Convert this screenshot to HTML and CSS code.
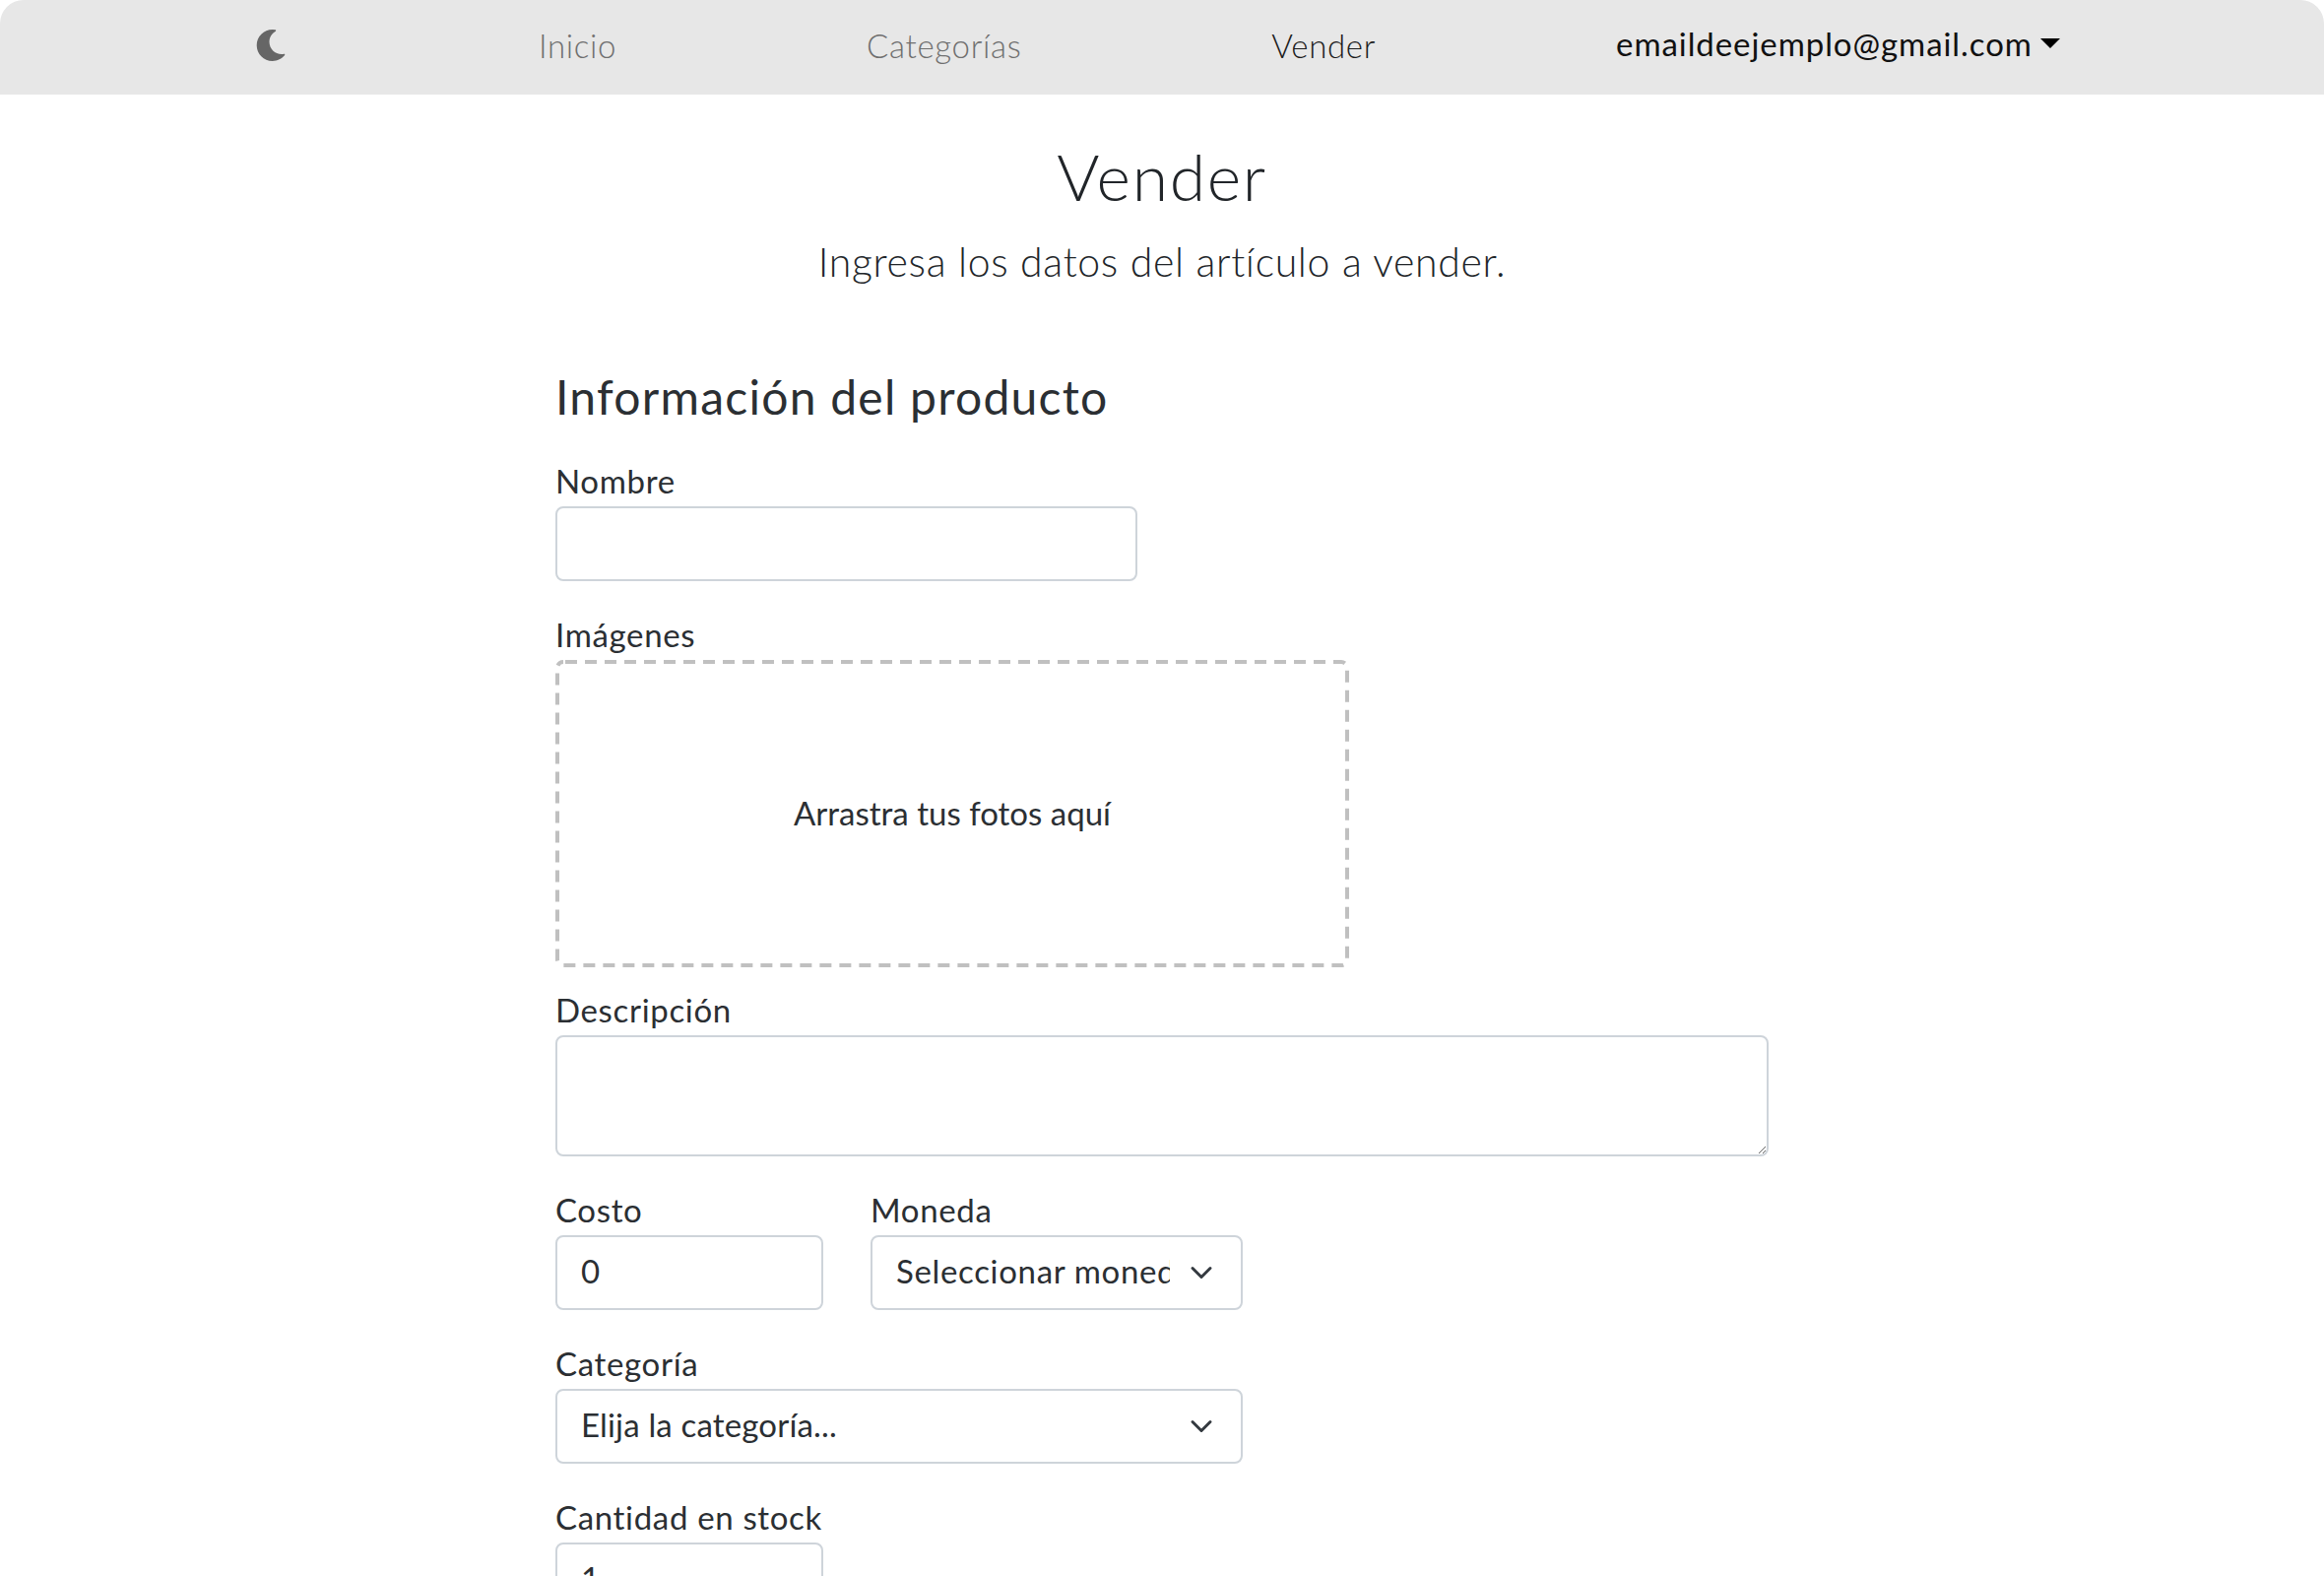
FILE: index.html
```html
<!DOCTYPE html>
<html>

<head>
    <title>Vender</title>
    <link rel="stylesheet" href="styles.css">
</head>

<body>

    <nav class="navbar">
        <svg class="moon" viewBox="0 0 512 512">
            <path d="M283.211 512c78.962 0 151.079-35.925 198.857-94.792 7.068-8.708-.639-21.43-11.562-19.35-124.203 23.654-238.262-71.576-238.262-196.954 0-72.222 38.662-138.635 101.498-174.394 9.686-5.512 7.25-20.197-3.756-22.23A258.156 258.156 0 0 0 283.211 0c-141.309 0-256 114.511-256 256 0 141.309 114.511 256 256 256z"/>
        </svg>
        <a class="nav-link" href="#">Inicio</a>
        <a class="nav-link" href="#">Categorías</a>
        <a class="nav-link active" href="#">Vender</a>
        <a class="nav-user" href="#">emaildeejemplo@gmail.com<span class="caret"></span></a>
    </nav>

    <main class="container">
        <div class="intro">
            <h2>Vender</h2>
            <p class="lead">Ingresa los datos del artículo a vender.</p>
        </div>

        <h4>Información del producto</h4>

        <form>
            <div class="field">
                <label for="nombre">Nombre</label>
                <input class="control w-name" id="nombre" type="text">
            </div>

            <div class="field field-drop">
                <label>Imágenes</label>
                <div class="dropzone">
                    <svg class="dashes" width="806" height="312">
                        <rect x="2" y="2" width="802" height="308" rx="6" />
                    </svg>
                    Arrastra tus fotos aquí
                </div>
            </div>

            <div class="field">
                <label for="descripcion">Descripción</label>
                <textarea class="control w-full" id="descripcion"></textarea>
            </div>

            <div class="field row">
                <div>
                    <label for="costo">Costo</label>
                    <input class="control w-small" id="costo" type="text" value="0">
                </div>
                <div>
                    <label for="moneda">Moneda</label>
                    <select class="control select w-currency" id="moneda">
                        <option>Seleccionar moneda</option>
                    </select>
                </div>
            </div>

            <div class="field">
                <label for="categoria">Categoría</label>
                <select class="control select w-category" id="categoria">
                    <option>Elija la categoría...</option>
                </select>
            </div>

            <div class="field">
                <label for="stock">Cantidad en stock</label>
                <input class="control w-small" id="stock" type="text" value="1">
            </div>
        </form>
    </main>

</body>

</html>
```

FILE: styles.css
```css
html {
    overflow: hidden;
}

body {
    margin: 0;
    font-family: Lato, 'Open Sans', sans-serif;
    font-size: 33px;
    font-weight: 400;
    line-height: 1.5;
    letter-spacing: 0.02em;
    color: #2b2f33;
    background-color: #fff;
}

/* Navbar */
.navbar {
    display: flex;
    align-items: center;
    gap: 254px;
    height: 96px;
    padding-left: 259px;
    background-color: #e7e7e7;
    border-radius: 24px 24px 0 0;
}

.moon {
    width: 32px;
    height: 32px;
    margin-top: -4px;
    margin-right: 2px;
    fill: #666;
}

.nav-link {
    margin-top: -2px;
    color: #6f6f6f;
    font-weight: 300;
    text-decoration: none;
}

.nav-link.active {
    color: #1c1c1c;
}

.nav-user {
    margin-top: -6px;
    margin-left: -10px;
    letter-spacing: 0.028em;
    color: #111;
    text-decoration: none;
}

.caret {
    display: inline-block;
    margin-left: 8px;
    vertical-align: 8px;
    border-top: 10px solid #000;
    border-left: 10px solid transparent;
    border-right: 10px solid transparent;
}

/* Page */
.container {
    width: 1232px;
    margin: 0 auto;
}

.intro {
    padding-top: 44px;
    margin-bottom: 78px;
    text-align: center;
}

h2 {
    margin: 0;
    font-size: 66px;
    font-weight: 300;
    line-height: 77px;
    letter-spacing: 0.025em;
    color: #212529;
}

.lead {
    margin: 19px 0 0;
    font-size: 41px;
    font-weight: 300;
    line-height: 60px;
    color: #212529;
}

h4 {
    margin: 0 0 34px;
    font-size: 48px;
    font-weight: 400;
    line-height: 58px;
    letter-spacing: 0.026em;
    color: #2b2f33;
}

/* Form */
.field {
    margin-bottom: 32px;
}

.field-drop {
    margin-bottom: 21px;
}

label {
    display: block;
    height: 48px;
    line-height: 45px;
}

.control {
    display: block;
    box-sizing: border-box;
    height: 76px;
    padding: 10px 24px 14px;
    font: inherit;
    letter-spacing: inherit;
    color: #2b2f33;
    background-color: #fff;
    border: 2px solid #ced4da;
    border-radius: 8px;
}

textarea.control {
    height: 123px;
}

.w-name {
    width: 591px;
}

.w-full {
    width: 1232px;
}

.w-small {
    width: 272px;
}

.w-currency {
    width: 378px;
}

.w-category {
    width: 698px;
    letter-spacing: 0.005em;
}

.select {
    padding-right: 72px;
    appearance: none;
    background-image: url("data:image/svg+xml,%3csvg xmlns='http://www.w3.org/2000/svg' viewBox='0 0 16 16'%3e%3cpath fill='none' stroke='%23343a40' stroke-linecap='round' stroke-linejoin='round' stroke-width='2' d='M2 5l6 6 6-6'/%3e%3c/svg%3e");
    background-repeat: no-repeat;
    background-position: right 24px center;
    background-size: 32px 24px;
}

.row {
    display: flex;
    gap: 48px;
}

.dropzone {
    position: relative;
    display: flex;
    align-items: center;
    justify-content: center;
    width: 806px;
    height: 312px;
    letter-spacing: 0;
}

/* drawn in svg, the browser's dashed border has shorter dashes */
.dashes {
    position: absolute;
    left: 0;
    top: 0;
    fill: none;
    stroke: #c0c0c0;
    stroke-width: 4;
    stroke-dasharray: 12 8;
    stroke-dashoffset: -2;
}
```
